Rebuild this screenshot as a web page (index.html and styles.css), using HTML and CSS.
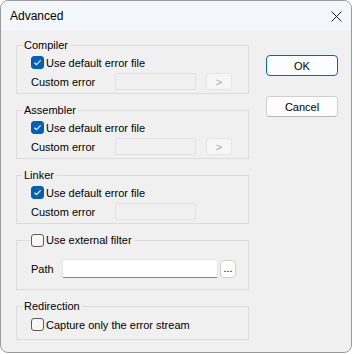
FILE: index.html
```html
<!DOCTYPE html>
<html lang="en">
<head>
  <meta charset="UTF-8" />
  <title>Advanced</title>
  <link rel="stylesheet" href="styles.css">
</head>
<body>
  <div class="window">
    <div class="titlebar">
      <span class="title">Advanced</span>
      <svg class="close" width="11" height="11" viewBox="0 0 11 11">
        <path d="M0.5 0.5 L10.5 10.5 M10.5 0.5 L0.5 10.5" />
      </svg>
    </div>
    <div class="content">
      <div class="groups">
        <fieldset class="group">
          <legend>Compiler</legend>
          <div class="check-row"><span class="box checked"><svg width="13" height="13" viewBox="0 0 13 13"><path d="M3.5 6.8 L5.5 8.7 L9.6 4.4" /></svg></span>Use default error file</div>
          <div class="field-row">
            <span class="field-label">Custom error</span>
            <span class="edit disabled"></span>
            <span class="btn-small disabled">&gt;</span>
          </div>
        </fieldset>

        <fieldset class="group">
          <legend>Assembler</legend>
          <div class="check-row"><span class="box checked"><svg width="13" height="13" viewBox="0 0 13 13"><path d="M3.5 6.8 L5.5 8.7 L9.6 4.4" /></svg></span>Use default error file</div>
          <div class="field-row">
            <span class="field-label">Custom error</span>
            <span class="edit disabled"></span>
            <span class="btn-small disabled">&gt;</span>
          </div>
        </fieldset>

        <fieldset class="group">
          <legend>Linker</legend>
          <div class="check-row"><span class="box checked"><svg width="13" height="13" viewBox="0 0 13 13"><path d="M3.5 6.8 L5.5 8.7 L9.6 4.4" /></svg></span>Use default error file</div>
          <div class="field-row">
            <span class="field-label">Custom error</span>
            <span class="edit disabled"></span>
          </div>
        </fieldset>

        <fieldset class="group filter">
          <legend class="check-legend"><span class="box"></span>Use external filter</legend>
          <div class="path-row">
            <span class="path-label">Path</span>
            <span class="edit path"></span>
            <span class="btn-small browse">...</span>
          </div>
        </fieldset>

        <fieldset class="group redirect">
          <legend>Redirection</legend>
          <div class="check-row"><span class="box"></span>Capture only the error stream</div>
        </fieldset>
      </div>

      <div class="actions">
        <button class="btn default">OK</button>
        <button class="btn">Cancel</button>
      </div>
    </div>
  </div>
</body>
</html>
```

FILE: styles.css
```css
html, body {
  margin: 0;
  padding: 0;
  background: #fff;
}
body {
  font-family: "Liberation Sans", Arial, sans-serif;
  font-size: 11px;
  color: #000;
}
.window {
  width: 352px;
  height: 353px;
  box-sizing: border-box;
  border: 1px solid #9a9a9a;
  border-radius: 8px;
  background: #f0f0f0;
  overflow: hidden;
  display: flex;
  flex-direction: column;
}
.titlebar {
  height: 30px;
  flex: none;
  background: #f3f6fb;
  display: flex;
  align-items: center;
  justify-content: space-between;
  padding: 0 9px 0 9px;
}
.title {
  font-size: 12px;
}
.close {
  margin-top: 1px;
}
.close path {
  stroke: #1a1a1a;
  stroke-width: 1;
  fill: none;
}
.content {
  display: flex;
  padding: 7px 0 0 15px;
}
.groups {
  width: 233px;
  display: flex;
  flex-direction: column;
  gap: 9px;
}
.group {
  margin: 0;
  padding: 1px 0 3px 14px;
  border: 1px solid #dcdcdc;
  min-width: 0;
}
.group legend {
  margin-left: -9px;
  padding: 0 2px;
  line-height: 15px;
}
.group legend.check-legend {
  margin-left: -1px;
  padding: 0 2px 0 1px;
  display: flex;
  align-items: center;
  gap: 2px;
}
.check-row {
  display: flex;
  align-items: center;
  gap: 2px;
  height: 17px;
}
.box {
  width: 13px;
  height: 13px;
  box-sizing: border-box;
  border: 1px solid #5c5c5c;
  border-radius: 3px;
  background: #f7f7f7;
  flex: none;
}
.box.checked {
  background: #005fb8;
  border-color: #005fb8;
  position: relative;
}
.box.checked svg {
  position: absolute;
  left: -1px;
  top: -1px;
}
.box.checked path {
  stroke: #fff;
  stroke-width: 1.2;
  fill: none;
}
.field-row {
  display: flex;
  align-items: center;
  height: 17px;
  margin-top: 2px;
}
.field-label {
  width: 84px;
}
.edit {
  height: 17px;
  box-sizing: border-box;
  border: 1px solid #e2e2e2;
  border-radius: 2px;
}
.edit.disabled {
  width: 81px;
  background: #f0f0f0;
}
.btn-small {
  height: 17px;
  box-sizing: border-box;
  border: 1px solid #e6e6e6;
  border-radius: 4px;
  display: flex;
  align-items: center;
  justify-content: center;
}
.btn-small.disabled {
  width: 26px;
  margin-left: 10px;
  background: #f6f6f6;
  color: #a8a8a8;
}
.filter {
  padding-top: 11px;
  padding-bottom: 11px;
}
.path-row {
  display: flex;
  align-items: center;
  height: 19px;
}
.path-label {
  width: 31px;
}
.edit.path {
  width: 156px;
  height: 19px;
  background: #fff;
  border-color: #e5e5e5;
  border-bottom-color: #868686;
}
.btn-small.browse {
  width: 16px;
  height: 18px;
  margin-left: 2px;
  background: #fdfdfd;
  border-color: #d0d0d0;
  align-items: flex-end;
  padding-bottom: 4px;
  line-height: 10px;
  font-size: 11px;
}
.redirect {
  padding-top: 2px;
  padding-bottom: 6px;
}
.actions {
  width: 72px;
  margin-left: 17px;
  padding-top: 17px;
  display: flex;
  flex-direction: column;
  gap: 20px;
}
.btn {
  height: 21px;
  padding: 0;
  font-family: inherit;
  font-size: 11px;
  font-weight: 400;
  color: #000;
  background: #fdfdfd;
  border: 1px solid #d0d0d0;
  border-bottom-color: #b8b8b8;
  border-radius: 4px;
}
.btn.default {
  border-color: #0067c0;
}
```
